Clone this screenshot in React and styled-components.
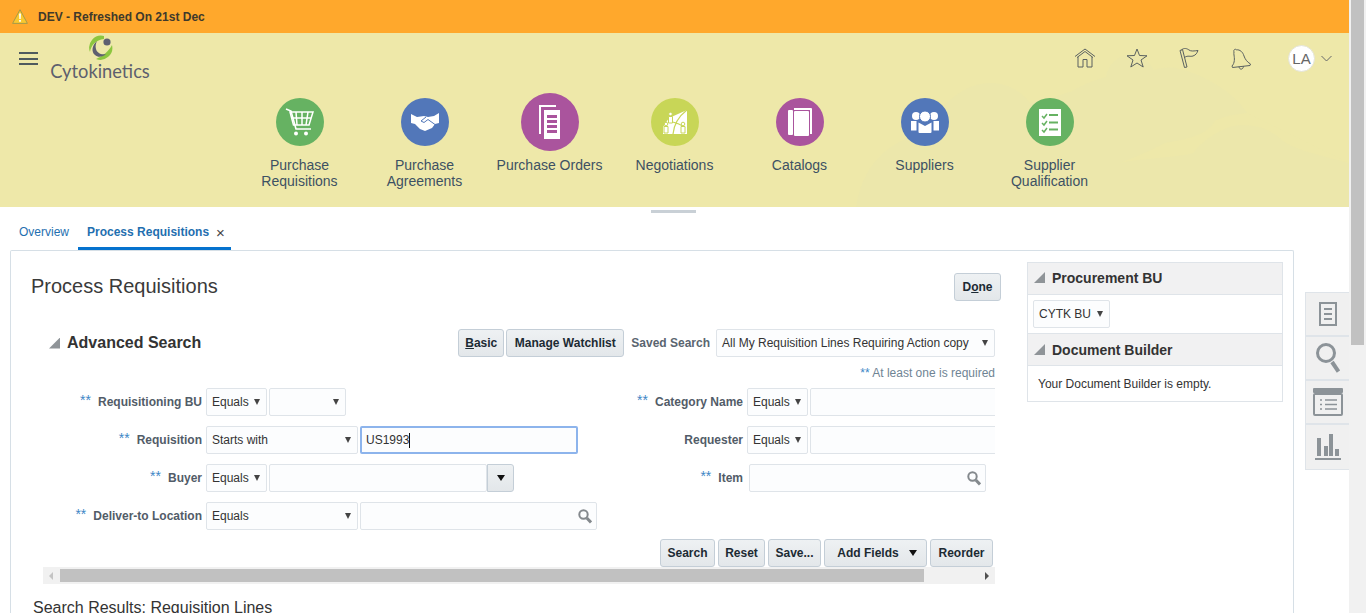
import React from 'react'
import styled, { createGlobalStyle } from 'styled-components'

const GlobalStyle = createGlobalStyle`
  html, body { margin: 0; padding: 0; background: #fff; overflow: hidden; }
  body { font-family: "Liberation Sans", Arial, sans-serif; font-size: 12px; color: #333; }
`

const Page = styled.div`
  display: flex;
  width: 1366px;
  height: 613px;
  overflow: hidden;
`
const Main = styled.div`
  width: 1349px;
  flex: none;
`
const PageScroll = styled.div`
  width: 17px;
  background: #f1f1f1;
  padding-left: 2px;
  box-sizing: border-box;
`
const PageThumb = styled.div`
  width: 13px;
  height: 345px;
  background: #c1c1c1;
`

const Banner = styled.div`
  height: 33px;
  background: #ffa82c;
  display: flex;
  align-items: center;
  padding-left: 12px;
  gap: 10px;
  font-weight: bold;
  color: #40392b;
`

const Header = styled.header`
  position: relative;
  height: 174px;
  background: #eee8a9;
  overflow: hidden;
`
const Clouds = styled.svg`
  position: absolute;
  left: 0;
  top: 0;
`
const TopBar = styled.div`
  position: relative;
  height: 60px;
  display: flex;
  padding: 0 17px 0 19px;
`
const Burger = styled.div`
  width: 19px;
  height: 13px;
  margin-top: 19px;
  border-top: 2px solid #4f5a5e;
  border-bottom: 2px solid #4f5a5e;
  box-sizing: border-box;
  position: relative;
  &::after {
    content: '';
    position: absolute;
    left: 0;
    right: 0;
    top: 3.5px;
    height: 2px;
    background: #4f5a5e;
  }
`
const Logo = styled.div`
  margin-left: 11px;
  width: 102px;
  display: flex;
  flex-direction: column;
  align-items: center;
  padding-top: 2px;
`
const LogoName = styled.div`
  font-family: Lato, "Open Sans", sans-serif;
  font-size: 18.3px;
  line-height: 22px;
  color: #5d5f6e;
`
const TopIcons = styled.div`
  margin-left: auto;
  display: flex;
  align-items: center;
  height: 50px;
`
const TopIcon = styled.div`
  width: 52px;
  display: flex;
  justify-content: center;
`
const Avatar = styled.div`
  width: 27px;
  height: 27px;
  border-radius: 50%;
  background: #fff;
  border: 1px solid #e4e4d8;
  box-sizing: border-box;
  margin-left: 21px;
  display: flex;
  align-items: center;
  justify-content: center;
  font-size: 15px;
  color: #666;
`
const Chevron = styled.svg`
  margin-left: 6px;
`
const Launcher = styled.nav`
  position: relative;
  display: flex;
  justify-content: center;
`
const LaunchItem = styled.div`
  width: 125px;
  display: flex;
  flex-direction: column;
  align-items: center;
  text-align: center;
  font-size: 14px;
  line-height: 16px;
  color: #3d5163;
`
const IconSlot = styled.div`
  height: 58px;
  margin-bottom: 6px;
  display: flex;
  align-items: center;
`
const Bubble = styled.div`
  width: ${p => (p.$big ? 58 : 48)}px;
  height: ${p => (p.$big ? 58 : 48)}px;
  border-radius: 50%;
  background: ${p => p.$color};
  display: flex;
  align-items: center;
  justify-content: center;
`

const HandleBar = styled.div`
  height: 15px;
  display: flex;
  justify-content: center;
  padding-top: 3px;
  box-sizing: border-box;
`
const Handle = styled.div`
  width: 45px;
  height: 3px;
  margin-right: 2px;
  background: #c9d0d6;
`
const Tabs = styled.div`
  height: 28px;
  padding-left: 10px;
  display: flex;
`
const Tab = styled.div`
  padding: 0 ${p => (p.$active ? 6 : 9)}px 6px 9px;
  display: flex;
  align-items: center;
  height: 28px;
  box-sizing: border-box;
  gap: 7px;
  color: #1f6fb0;
  font-weight: ${p => (p.$active ? 'bold' : 'normal')};
  border-bottom: 3px solid ${p => (p.$active ? '#0572ce' : 'transparent')};
`
const TabClose = styled.span`
  font-weight: normal;
  font-size: 15px;
  color: #444;
  line-height: 12px;
  margin-top: 3px;
`

const Body = styled.div`
  display: flex;
`
const Panel = styled.section`
  width: 1284px;
  margin-left: 10px;
  height: 363px;
  box-sizing: border-box;
  border: 1px solid #d6dfe6;
  border-bottom: 0;
  border-radius: 2px 2px 0 0;
  display: flex;
`
const Content = styled.div`
  width: 990px;
  box-sizing: border-box;
  padding: 22px 0 0 20px;
`
const TitleRow = styled.div`
  display: flex;
  justify-content: space-between;
  align-items: center;
  height: 28px;
`
const Title = styled.h1`
  margin: -2px 0 0;
  font-weight: normal;
  font-size: 20px;
  color: #3a3a3a;
`
const Btn = styled.button`
  height: 28px;
  width: ${p => p.$w}px;
  padding: 0;
  flex: none;
  font: bold 12px "Liberation Sans", Arial, sans-serif;
  color: #1c2a33;
  background: linear-gradient(#eef1f3, #e3e7ea);
  border: 1px solid #c4ced7;
  border-radius: 3px;
  display: inline-flex;
  align-items: center;
  justify-content: center;
  box-sizing: border-box;
  u { text-decoration: underline; }
`
const Search = styled.div`
  width: 952px;
  margin: 28px 0 0 12px;
`
const SearchHead = styled.div`
  height: 28px;
  display: flex;
  align-items: center;
  gap: 2px;
  padding-left: 6px;
`
const Collapse = styled.span`
  width: 11px;
  height: 11px;
  background: #8f9498;
  clip-path: polygon(100% 0, 100% 100%, 0 100%);
  flex: none;
`
const SearchTitle = styled.h2`
  margin: 0 auto 0 5px;
  font-size: 16px;
  font-weight: bold;
  color: #333;
`
const SavedLabel = styled.span`
  margin: 0 4px 0 5px;
  font-weight: bold;
  color: #5a6570;
`
const Field = styled.div`
  flex: none;
  width: ${p => p.$w}px;
  height: 28px;
  box-sizing: border-box;
  background: #fcfdfe;
  border: 1px solid #dfe4e9;
  border-radius: 2px;
  display: flex;
  align-items: center;
  padding: 0 6px 0 5px;
  color: #333;
  white-space: nowrap;
`
const Arrow = styled.span`
  width: 0;
  height: 0;
  margin-left: ${p => (p.$dark ? 0 : 'auto')};
  border-left: ${p => (p.$dark ? 4 : 3.5)}px solid transparent;
  border-right: ${p => (p.$dark ? 4 : 3.5)}px solid transparent;
  border-top: 6px solid ${p => (p.$dark ? '#111' : '#444')};
`
const ReqNote = styled.div`
  margin-top: 8px;
  height: 16px;
  line-height: 16px;
  text-align: right;
  color: #6f8494;
`
const Star = styled.span`
  color: #3d87c6;
`
const FormGrid = styled.div`
  display: grid;
  grid-template-columns: 557px 395px;
  margin-top: 7px;
  overflow: hidden;
`
const FormCol = styled.div`
  display: flex;
  flex-direction: column;
  gap: 10px;
`
const Row = styled.div`
  display: flex;
  gap: 2px;
  height: 28px;
  align-items: center;
`
const Label = styled.label`
  flex: none;
  width: ${p => p.$w}px;
  margin-right: ${p => p.$gap || 2}px;
  display: flex;
  justify-content: flex-end;
  align-items: center;
  gap: 7px;
  font-weight: bold;
  color: #525c68;
`
const StarMark = styled(Star)`
  font-weight: normal;
  font-size: 14px;
  line-height: 14px;
  margin-top: -5px;
`
const FocusField = styled(Field)`
  border: 2px solid #8db4ec;
  padding-left: 4px;
`
const LookupField = styled(Field)`
  justify-content: flex-end;
  padding-right: 4px;
`
const Caret = styled.span`
  display: inline-block;
  width: 1px;
  height: 15px;
  background: #111;
`
const Combo = styled.div`
  width: 27px;
  height: 28px;
  flex: none;
  margin-left: -2px;
  box-sizing: border-box;
  background: linear-gradient(#eef1f3, #e3e7ea);
  border: 1px solid #c4ced7;
  border-radius: 0 3px 3px 0;
  display: flex;
  align-items: center;
  justify-content: center;
`
const Actions = styled.div`
  display: flex;
  justify-content: flex-end;
  gap: 3px;
  margin-top: 9px;
  padding-right: 2px;
`
const FieldsLabel = styled.span`
  margin: 0 10px 0 3px;
`
const HScroll = styled.div`
  height: 17px;
  background: #f1f1f1;
  display: flex;
  align-items: center;
  justify-content: space-between;
`
const HThumb = styled.div`
  width: 864px;
  height: 13px;
  margin-left: 17px;
  margin-right: auto;
  background: #c1c1c1;
`
const HArrow = styled.span`
  width: 0;
  height: 0;
  border-top: 4px solid transparent;
  border-bottom: 4px solid transparent;
  ${p => (p.$left
    ? 'border-right: 4px solid #c4c4c4; position: absolute; margin-left: 6px;'
    : 'border-left: 4px solid #505050; margin-right: 6px;')}
`
const Results = styled.h3`
  margin: 15px 0 0 2px;
  font-size: 16px;
  line-height: 18px;
  font-weight: normal;
  color: #333;
`

const Side = styled.aside`
  width: 256px;
  margin: 11px 0 0 26px;
  border: 1px solid #dfe4e9;
  border-top: 0;
  align-self: flex-start;
  box-sizing: border-box;
`
const SideHead = styled.div`
  height: 33px;
  box-sizing: border-box;
  background: #f1f1f2;
  border-top: 1px solid #dfe4e9;
  border-bottom: 1px solid #dfe4e9;
  display: flex;
  align-items: center;
  gap: 7px;
  padding: 0 0 ${p => (p.$low ? 0 : 2)}px 6px;
  font-size: 14px;
  font-weight: bold;
  color: #333;
`
const SideBody = styled.div`
  padding: ${p => p.$pad};
  box-sizing: border-box;
  height: ${p => p.$h}px;
`

const Rail = styled.div`
  width: 44px;
  margin: 42px 0 0 11px;
  background: #f0f0f0;
  border: 1px solid #dfe4e9;
  border-right: 0;
  box-sizing: border-box;
  align-self: flex-start;
`
const RailItem = styled.div`
  height: 44px;
  display: flex;
  align-items: center;
  justify-content: center;
  box-sizing: border-box;
  border-bottom: ${p => (p.$last ? 0 : '2px solid #dfe4e9')};
`

const CartIcon = () => (
  <svg width="30" height="30" viewBox="0 0 30 30" fill="none" stroke="#fff">
    <path d="M1 2 L6 4 L11 22 H26" strokeWidth="1.6" />
    <path d="M5 5 H28 L24 18 H8.5 Z M11 5 L12 18 M17 5 V18 M23 5 L21 18 M6.5 11 H26.5" strokeWidth="1.5" />
    <circle cx="11" cy="26.5" r="2" fill="#fff" stroke="none" />
    <circle cx="21" cy="26.5" r="2" fill="#fff" stroke="none" />
  </svg>
)
const ShakeIcon = () => (
  <svg width="28" height="18" viewBox="0 0 28 18">
    <path d="M0 1 L6 4 L13 3 L17 4 L23 3 L28 0 V10 L24 11 L21 15 L14 18 L9 16 L4 11 L0 10 Z" fill="#fff" />
    <path d="M15 4 L10 8 L13 9.500 L17 6.500 L24 11.500" fill="none" stroke="#5277b9" strokeWidth="1" />
  </svg>
)
const OrdersIcon = () => (
  <svg width="22" height="34" viewBox="0 0 22 34" fill="#fff">
    <path d="M0 0 H17 V2 H2 V29 H0 Z" />
    <path fillRule="evenodd" d="M5 5 H21 V34 H5 Z M8 10 V13 H18 V10 Z M8 15 V18 H18 V15 Z M8 20 V23 H18 V20 Z M8 25 V28 H18 V25 Z" />
  </svg>
)
const negoPeople = [[7.500, 4], [3, 14], [20, 14]]
const NegoIcon = () => (
  <svg width="24" height="24" viewBox="0 0 24 24">
    <path d="M0 24 V17 L6 8 L24 0 V24 Z" fill="#fff" />
    <path d="M24 0 C16 6 11 14 10 24 M5 11 C10 12 17 13 22 18" fill="none" stroke="#c8d657" strokeWidth="1.200" />
    {negoPeople.map(([x, y]) => (
      <g key={x} fill="#fff" stroke="#c8d657" strokeWidth="1">
        <circle cx={x} cy={y} r="1.800" />
        <path d={`M${x - 2} ${y + 2.500} H${x + 2} V${y + 9} H${x - 2} Z`} />
      </g>
    ))}
  </svg>
)
const BookIcon = () => (
  <svg width="24" height="28" viewBox="0 0 24 28" fill="#fff">
    <path d="M6 0 H23 Q24 0 24 1 V26 H22 V2 H6 Z" />
    <rect x="0" y="2" width="5" height="25" rx="1" />
    <rect x="6" y="3" width="15" height="25" rx="1" />
  </svg>
)
const TeamIcon = () => (
  <svg width="28" height="22" viewBox="0 0 28 22" fill="#fff">
    <circle cx="5" cy="5" r="4" />
    <circle cx="23" cy="5" r="4" />
    <circle cx="14" cy="5.500" r="5.500" stroke="#5277b9" strokeWidth="1" />
    <path d="M0 10 H5.500 V19.500 H0 Z M22.500 10 H28 V19.500 H22.500 Z" />
    <path d="M7.500 11.500 L14 15 L20.500 11.500 V21 Q20.500 22 19.500 22 H8.500 Q7.500 22 7.500 21 Z" />
  </svg>
)
const ChecklistIcon = () => (
  <svg width="22" height="27" viewBox="0 0 22 27">
    <rect width="22" height="27" fill="#fff" />
    <path d="M3 7 L5 9 L8 5 M3 14 L5 16 L8 12 M3 21 L5 23 L8 19" stroke="#66b262" strokeWidth="1.5" fill="none" />
    <path d="M10 6 H19 M10 13.500 H19 M10 20.500 H19" stroke="#66b262" strokeWidth="2" />
  </svg>
)

const launchers = [
  { label: ['Purchase', 'Requisitions'], color: '#66b262', icon: <CartIcon /> },
  { label: ['Purchase', 'Agreements'], color: '#5277b9', icon: <ShakeIcon /> },
  { label: ['Purchase Orders'], color: '#aa549d', icon: <OrdersIcon />, big: true },
  { label: ['Negotiations'], color: '#c8d657', icon: <NegoIcon /> },
  { label: ['Catalogs'], color: '#aa549d', icon: <BookIcon /> },
  { label: ['Suppliers'], color: '#5277b9', icon: <TeamIcon /> },
  { label: ['Supplier', 'Qualification'], color: '#66b262', icon: <ChecklistIcon /> },
]

const Magnifier = () => (
  <svg width="14" height="15" viewBox="0 0 14 15" fill="none" stroke="#84898d">
    <circle cx="5.500" cy="5.500" r="4.200" strokeWidth="2" />
    <path d="M8.800 9 L13 13.500" strokeWidth="3" />
  </svg>
)

const Select = ({ w, children }) => (
  <Field $w={w}>
    {children}
    <Arrow />
  </Field>
)

const App = () => (
  <Page>
    <GlobalStyle />
    <Main>
      <Banner>
        <svg width="16" height="15" viewBox="0 0 16 15">
          <path d="M8 .7 L15.400 14.400 H.6 Z" fill="#f9c82f" stroke="#a69a4a" />
          <path d="M7 4.500 H9 L8.700 10 H7.300 Z M7.100 11 H8.900 V12.800 H7.100 Z" fill="#fff" />
        </svg>
        DEV - Refreshed On 21st Dec
      </Banner>

      <Header>
        <Clouds width="1349" height="174" viewBox="0 0 1349 174">
          <path d="M856 174 C862 135 885 108 925 100 C940 70 965 50 990 50 C1005 50 1018 55 1030 70 C1045 68 1060 62 1072 58 C1085 50 1098 46 1106 44 C1108 30 1120 20 1134 22 C1145 24 1150 30 1154 37 C1165 34 1172 34 1180 36 C1205 42 1235 60 1247 80 L1349 130 V174 Z" fill="#ece7ab" />
          <path d="M1247 80 C1232 82 1222 84 1215 88 C1208 100 1195 105 1165 110 C1150 118 1140 122 1120 130 C1140 125 1175 125 1193 120 C1205 105 1225 92 1243 92 C1258 92 1270 97 1280 105 C1290 116 1320 122 1349 130 Z" fill="#eee8a9" />
        </Clouds>
        <TopBar>
          <Burger />
          <Logo>
            <svg width="25" height="25" viewBox="0 0 25 25">
              <path d="M16 1 A12 12 0 0 0 2 17 C3 10 8 5 16 4 Z" fill="#8cc63f" />
              <path d="M8 24 A12 12 0 0 0 24 10 C21 16 15 21 8 24 Z" fill="#8cc63f" />
              <path d="M9 6 C4 10 3 17 7 20 C10 23 15 22 18 19 C13 20 9 18 8 14 C7 11 8 8 9 6 Z" fill="#5e6070" />
              <circle cx="19" cy="7" r="3.600" fill="#5e6070" />
            </svg>
            <LogoName>Cytokinetics</LogoName>
          </Logo>
          <TopIcons>
            <TopIcon>
              <svg width="22" height="20" viewBox="0 0 22 20" fill="none" stroke="#5a6160">
                <path d="M1 8.500 L11 1 L21 8.500 M3 9.500 L11 3.500 L19 9.500 M4 9 V19 H9 V11.500 H13 V19 H18 V9" />
              </svg>
            </TopIcon>
            <TopIcon>
              <svg width="22" height="20" viewBox="0 0 22 20" fill="none" stroke="#5a6160">
                <path d="M11 1 L13.500 7.500 L21 7.800 L15 12 L17.200 19 L11 15 L4.800 19 L7 12 L1 7.800 L8.500 7.500 Z" />
              </svg>
            </TopIcon>
            <TopIcon>
              <svg width="20" height="20" viewBox="0 0 20 20" fill="none" stroke="#5a6160">
                <path d="M1 2.500 L3.500 1.500 L8 19 L5.500 19.500 Z M2.500 2 C5 -.5 8 .5 10 2 C12 3.500 15 3 19 2.500 C18 5 17 7 14 8 C11 9 9 7 5.500 9.500" />
              </svg>
            </TopIcon>
            <TopIcon>
              <svg width="24" height="24" viewBox="0 0 24 24" fill="none" stroke="#5a6160">
                <path d="M5 6 C4.200 4 6 2.400 7.500 3.800 C11 3.500 13.800 6 15 10 C16 13 18 16 21.500 18 L21 19.500 L3.500 21.500 L3 20 C6 17 5.500 12 5 9 C4.800 8 4.800 7 5 6 Z M10 20.800 C10.500 24 14 24 14.500 20.300" />
              </svg>
            </TopIcon>
            <Avatar>LA</Avatar>
            <Chevron width="11" height="7" viewBox="0 0 11 7" fill="none" stroke="#66696a">
              <path d="M.5 1 L5.500 6 L10.500 1" />
            </Chevron>
          </TopIcons>
        </TopBar>
        <Launcher>
          {launchers.map(item => (
            <LaunchItem key={item.label.join(' ')}>
              <IconSlot>
                <Bubble $color={item.color} $big={item.big}>{item.icon}</Bubble>
              </IconSlot>
              {item.label.map(line => <div key={line}>{line}</div>)}
            </LaunchItem>
          ))}
        </Launcher>
      </Header>

      <HandleBar><Handle /></HandleBar>
      <Tabs>
        <Tab>Overview</Tab>
        <Tab $active>
          Process Requisitions
          <TabClose>×</TabClose>
        </Tab>
      </Tabs>

      <Body>
        <Panel>
          <Content>
            <TitleRow>
              <Title>Process Requisitions</Title>
              <Btn $w={47}>D<u>o</u>ne</Btn>
            </TitleRow>
            <Search>
              <SearchHead>
                <Collapse />
                <SearchTitle>Advanced Search</SearchTitle>
                <Btn $w={46}><u>B</u>asic</Btn>
                <Btn $w={118}>Manage Watchlist</Btn>
                <SavedLabel>Saved Search</SavedLabel>
                <Select w={279}>All My Requisition Lines Requiring Action copy</Select>
              </SearchHead>
              <ReqNote><Star>**</Star> At least one is required</ReqNote>
              <FormGrid>
                <FormCol>
                  <Row>
                    <Label $w={159}><StarMark>**</StarMark>Requisitioning BU</Label>
                    <Select w={61}>Equals</Select>
                    <Select w={77} />
                  </Row>
                  <Row>
                    <Label $w={159}><StarMark>**</StarMark>Requisition</Label>
                    <Select w={152}>Starts with</Select>
                    <FocusField $w={218}>US1993<Caret /></FocusField>
                  </Row>
                  <Row>
                    <Label $w={159}><StarMark>**</StarMark>Buyer</Label>
                    <Select w={61}>Equals</Select>
                    <Field $w={218} />
                    <Combo><Arrow $dark /></Combo>
                  </Row>
                  <Row>
                    <Label $w={159}><StarMark>**</StarMark>Deliver-to Location</Label>
                    <Select w={152}>Equals</Select>
                    <LookupField $w={237}><Magnifier /></LookupField>
                  </Row>
                </FormCol>
                <FormCol>
                  <Row>
                    <Label $w={143}><StarMark>**</StarMark>Category Name</Label>
                    <Select w={61}>Equals</Select>
                    <Field $w={200} />
                  </Row>
                  <Row>
                    <Label $w={143}>Requester</Label>
                    <Select w={61}>Equals</Select>
                    <Field $w={200} />
                  </Row>
                  <Row>
                    <Label $w={143} $gap={4}><StarMark>**</StarMark>Item</Label>
                    <LookupField $w={237}><Magnifier /></LookupField>
                  </Row>
                </FormCol>
              </FormGrid>
              <Actions>
                <Btn $w={55}>Search</Btn>
                <Btn $w={47}>Reset</Btn>
                <Btn $w={53}>Save...</Btn>
                <Btn $w={103}><FieldsLabel>Add Fields</FieldsLabel><Arrow $dark /></Btn>
                <Btn $w={63}>Reorder</Btn>
              </Actions>
              <HScroll>
                <HArrow $left />
                <HThumb />
                <HArrow />
              </HScroll>
            </Search>
            <Results>Search Results: Requisition Lines</Results>
          </Content>

          <Side>
            <SideHead><Collapse />Procurement BU</SideHead>
            <SideBody $pad="5px" $h={38}>
              <Select w={77}>CYTK BU</Select>
            </SideBody>
            <SideHead $low><Collapse />Document Builder</SideHead>
            <SideBody $pad="11px 10px 0" $h={35}>Your Document Builder is empty.</SideBody>
          </Side>
        </Panel>

        <Rail>
          <RailItem>
            <svg width="18" height="24" viewBox="0 0 18 24" fill="none" stroke="#8c9398">
              <rect x="1" y="1" width="16" height="22" strokeWidth="2" />
              <path d="M5 7 H13 M5 12 H13 M5 17 H13" strokeWidth="2" />
            </svg>
          </RailItem>
          <RailItem>
            <svg width="24" height="30" viewBox="0 0 24 30" fill="none" stroke="#8c9398">
              <circle cx="10" cy="10" r="8.500" strokeWidth="3" />
              <path d="M16 19 L22.500 28.500" strokeWidth="4" />
            </svg>
          </RailItem>
          <RailItem>
            <svg width="30" height="28" viewBox="0 0 30 28" fill="none" stroke="#8c9398">
              <rect x="0" y="0" width="30" height="5" rx="1" fill="#8c9398" stroke="none" />
              <rect x="1" y="6" width="28" height="21" rx="1" strokeWidth="2" />
              <path d="M7 12 H9 M12 12 H24 M7 16.500 H9 M12 16.500 H24 M7 21 H9 M12 21 H24" strokeWidth="1.500" />
            </svg>
          </RailItem>
          <RailItem $last>
            <svg width="26" height="26" viewBox="0 0 26 26" fill="#8c9398">
              <rect x="2" y="4" width="4" height="18" />
              <rect x="9" y="12" width="4" height="10" />
              <rect x="14" y="0" width="4" height="22" />
              <rect x="20" y="15" width="4" height="7" />
              <rect x="0" y="24" width="26" height="2" />
            </svg>
          </RailItem>
        </Rail>
      </Body>
    </Main>
    <PageScroll><PageThumb /></PageScroll>
  </Page>
)

export default App
